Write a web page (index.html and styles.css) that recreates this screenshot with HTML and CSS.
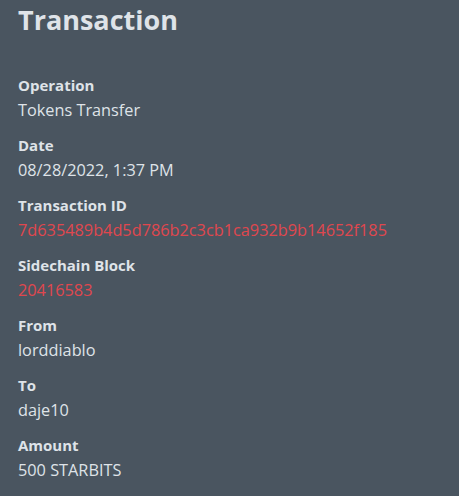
FILE: index.html
```html
<!DOCTYPE html>
<html lang="en">

<head>
    <meta charset="UTF-8">
    <meta name="viewport" content="width=device-width, initial-scale=1.0">
    <title>Transaction</title>
    <link rel="stylesheet" href="styles.css">
</head>

<body>
    <div class="transaction">
        <h2>Transaction</h2>
        <dl class="details">
            <div class="detail">
                <dt>Operation</dt>
                <dd>Tokens Transfer</dd>
            </div>
            <div class="detail">
                <dt>Date</dt>
                <dd>08/28/2022, 1:37 PM</dd>
            </div>
            <div class="detail">
                <dt>Transaction ID</dt>
                <dd class="link">7d635489b4d5d786b2c3cb1ca932b9b14652f185</dd>
            </div>
            <div class="detail">
                <dt>Sidechain Block</dt>
                <dd class="link">20416583</dd>
            </div>
            <div class="detail">
                <dt>From</dt>
                <dd>lorddiablo</dd>
            </div>
            <div class="detail">
                <dt>To</dt>
                <dd>daje10</dd>
            </div>
            <div class="detail">
                <dt>Amount</dt>
                <dd>500 STARBITS</dd>
            </div>
        </dl>
    </div>
</body>

</html>
```

FILE: styles.css
```css
* {
    margin: 0;
    padding: 0;
    box-sizing: border-box;
}

body {
    background: #4a5560;
    color: #dfe3e8;
    font-family: 'Open Sans', 'Noto Sans', sans-serif;
}

.transaction {
    padding: 0 18px;
}

.transaction h2 {
    font-size: 27px;
    font-weight: bold;
    line-height: 40px;
    margin-bottom: 34px;
}

.details {
    display: flex;
    flex-direction: column;
    gap: 11px;
}

dt {
    font-size: 15px;
    font-weight: bold;
    line-height: 23px;
}

dd {
    font-size: 16.3px;
    line-height: 25px;
    padding-top: 1px;
}

.link {
    color: #e0474e;
}
```
